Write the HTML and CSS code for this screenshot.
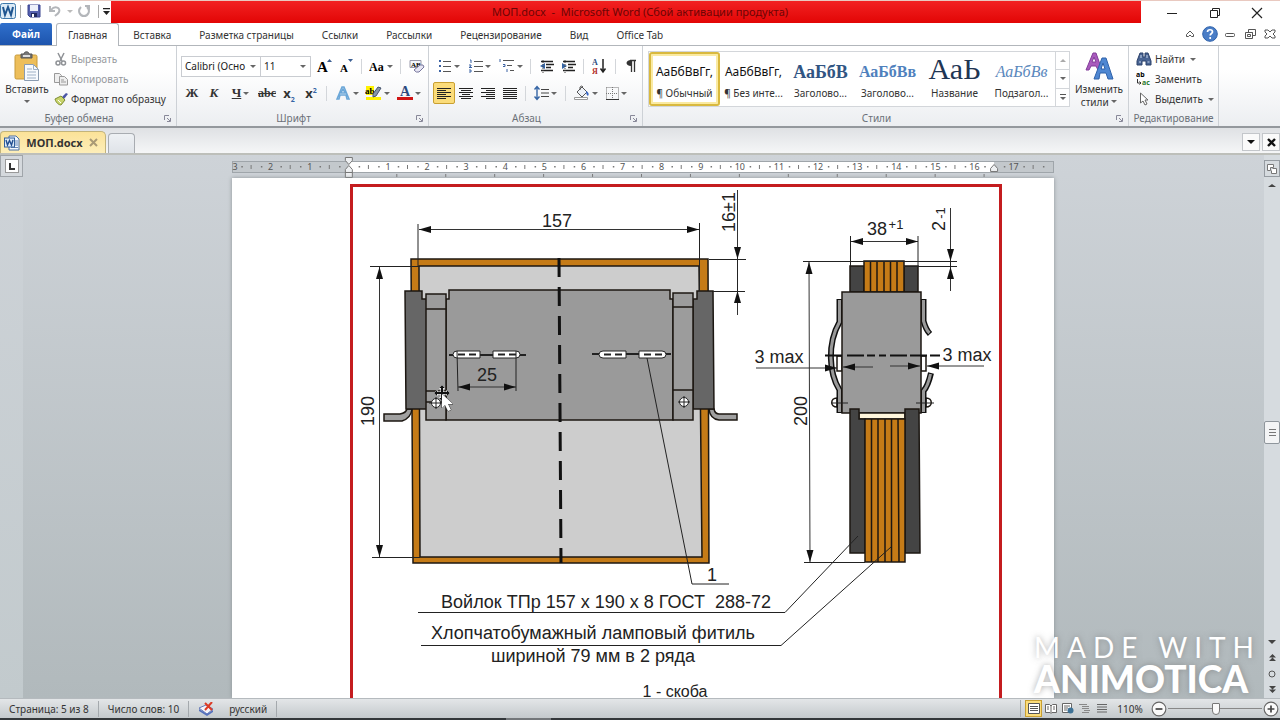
FILE: index.html
```html
<!DOCTYPE html>
<html lang="ru">
<head>
<meta charset="utf-8">
<title>МОП.docx - Microsoft Word</title>
<link rel="stylesheet" href="styles.css">
</head>
<body>
<header class="titlebar">
  <div class="quick">
    <svg class="logo" width="16" height="16" viewBox="0 0 16 16"><rect x=".5" y=".5" width="15" height="15" rx="2" fill="#dceaf6" stroke="#3e78ab"/><path d="M3 4l2 8 3-8 3 8 2-8" fill="none" stroke="#1f5590" stroke-width="2"/></svg>
    <i class="bar"></i>
    <button class="ib" aria-label="Сохранить"><svg width="14" height="14" viewBox="0 0 14 14"><path d="M1 1h12v12H3l-2-2z" fill="#5560ae" stroke="#3b4590"/><path d="M3 1h8v6H3z" fill="#eef1fa"/><path d="M4 9h6v4H4z" fill="#222b60"/><path d="M5 10h2v3H5z" fill="#fff"/></svg></button>
    <button class="ib" aria-label="Отменить"><svg width="14" height="14" viewBox="0 0 14 14"><path d="M2 2v5h5M3 6c4-5 10-2 8 2-1 2-3 3-4 4" fill="none" stroke="#b3b6ba" stroke-width="2"/></svg></button>
    <i class="caret pale"></i>
    <button class="ib" aria-label="Вернуть"><svg width="14" height="14" viewBox="0 0 14 14"><path d="M4 3c-4 4-1 9 3 9s7-5 3-9M8 2h4v4" fill="none" stroke="#b3b6ba" stroke-width="2"/></svg></button>
    <i class="bar"></i>
    <button class="ib narrow" aria-label="Настройка панели"><svg width="7" height="7" viewBox="0 0 7 7"><path d="M0 0h7v1.300H0zM0 3h7l-3.500 4z" fill="#222"/></svg></button>
  </div>
  <h1 class="title">МОП.docx &nbsp;-&nbsp; Microsoft Word (Сбой активации продукта)</h1>
  <div class="wincontrols">
    <button aria-label="Свернуть"><svg width="12" height="12" viewBox="0 0 12 12"><path d="M1 6.500h10" stroke="#222"/></svg></button>
    <button aria-label="Восстановить"><svg width="12" height="12" viewBox="0 0 12 12"><path d="M1.500 3.500h7v7h-7zM3.500 3V1.500h7v7H9" fill="none" stroke="#222"/></svg></button>
    <button aria-label="Закрыть"><svg width="12" height="12" viewBox="0 0 12 12"><path d="M1 1l10 10M11 1L1 11" stroke="#222" stroke-width="1.200"/></svg></button>
  </div>
</header>

<nav class="tabs">
  <button class="file">Файл</button>
  <button class="tab active">Главная</button>
  <button class="tab">Вставка</button>
  <button class="tab">Разметка страницы</button>
  <button class="tab">Ссылки</button>
  <button class="tab">Рассылки</button>
  <button class="tab">Рецензирование</button>
  <button class="tab">Вид</button>
  <button class="tab">Office Tab</button>
  <div class="doccontrols">
    <button aria-label="Свернуть ленту"><svg width="10" height="8" viewBox="0 0 10 8"><path d="M1.500 4.500L5 1l3.500 3.500v2H6.500L5 5 3.500 6.500h-2z" fill="#fff" stroke="#555"/></svg></button>
    <button aria-label="Справка"><svg width="16" height="16" viewBox="0 0 16 16"><circle cx="8" cy="8" r="7.300" fill="#4a7dc6" stroke="#2f62ab"/><path d="M5.500 6c0-3 5-3 5 0 0 1.500-2.300 1.600-2.300 3.600M8.200 11v2" fill="none" stroke="#fff" stroke-width="1.700"/></svg></button>
    <button aria-label="Свернуть окно"><svg width="12" height="12" viewBox="0 0 12 12"><rect x="1.500" y="5.500" width="9" height="3" rx="1" fill="#fff" stroke="#555"/></svg></button>
    <button aria-label="Восстановить окно"><svg width="12" height="12" viewBox="0 0 12 12"><path d="M4.500 1.500h7v6h-3v-3h-4z" fill="#fff" stroke="#555"/><path d="M1.500 4.500h7v6h-7zM3.500 6.500h3v2h-3z" fill="#fff" stroke="#555"/></svg></button>
    <button aria-label="Закрыть окно"><svg width="12" height="10" viewBox="0 0 12 10"><path d="M1 1h3l2 2 2-2h3v2L9 5l2 2v2H8L6 7 4 9H1V7l2-2-2-2z" fill="#fff" stroke="#555"/></svg></button>
  </div>
</nav>

<section class="ribbon">
  <div class="group clip">
    <div class="body">
      <button class="big"><svg width="26" height="30" viewBox="0 0 26 30"><rect x="1" y="4" width="22" height="24" rx="1.500" fill="#edbe5a" stroke="#c79a3b"/><path d="M7 3h3c0-3 5-3 5 0h3v4H7z" fill="#777" stroke="#555"/><path d="M9 4h7v2H9z" fill="#ddd"/><path d="M10.500 13.500h9l5 5v11h-14z" fill="#f7fafe" stroke="#8a9bb0"/><path d="M19.500 13.500v5h5M13 18h5M13 21h9M13 24h9M13 27h9" fill="none" stroke="#9db0c6"/></svg><span>Вставить</span><i class="caret"></i></button>
      <div class="stack">
        <button class="small off"><svg width="14" height="14" viewBox="0 0 14 14"><path d="M4 1l4 8M10 1L6 9" stroke="#8f9296" stroke-width="1.500"/><circle cx="4" cy="11" r="2" fill="none" stroke="#8f9296" stroke-width="1.500"/><circle cx="9.500" cy="11" r="2" fill="none" stroke="#8f9296" stroke-width="1.500"/></svg>Вырезать</button>
        <button class="small off"><svg width="14" height="14" viewBox="0 0 14 14"><path d="M.5 1.500h5l2 2v7h-7z" fill="#eee" stroke="#999"/><path d="M5.500 4.500h5l3 3v5.500h-8zM7 8h3M7 10h5" fill="#eee" stroke="#999"/></svg>Копировать</button>
        <button class="small"><svg width="14" height="14" viewBox="0 0 14 14"><path d="M8 5l4-4 2 1-4 5z" fill="#4b55a5"/><path d="M1 7l6-3 4 4-4 5c-2 0-5-2-6-6z" fill="#c8d36c" stroke="#7d8d33"/><path d="M4 8l3 3" stroke="#fff"/></svg>Формат по образцу</button>
      </div>
    </div>
    <div class="caption"><span>Буфер обмена</span><svg class="launch" width="7" height="7" viewBox="0 0 7 7"><path d="M.5 5V.5H5M3 3l3 3M6.500 3v3.500H3" fill="none" stroke="#889"/></svg></div>
  </div>

  <div class="group font">
    <div class="body rows">
      <div class="row">
        <label class="pick name"><select aria-label="Шрифт"><option>Calibri (Осно</option></select></label>
        <label class="pick size"><select aria-label="Размер"><option>11</option></select></label>
        <button class="tb grow">
          <svg width="16" height="16" viewBox="0 0 16 16"><text x="1" y="14" class="serif" font-size="15">A</text><path d="M11 4l2.500-3L16 4z" fill="#3b5f93"/></svg></button>
        <button class="tb"><svg width="16" height="16" viewBox="0 0 16 16"><text x="2" y="14" class="serif" font-size="11">A</text><path d="M10 1h5l-2.500 3z" fill="#3b5f93"/></svg></button>
        <i class="sep"></i>
        <button class="tb wide"><svg width="16" height="16" viewBox="0 0 16 16"><text x="0" y="13" class="serif" font-size="12">Aa</text></svg><i class="caret"></i></button>
        <i class="sep"></i>
        <button class="tb mid"><svg width="16" height="16" viewBox="0 0 16 16"><path d="M1 2.500h11v7H1z" fill="#f4f6fa" stroke="#99a"/><text x="2" y="9" font-size="7" class="serif">AB</text><path d="M5 12l6-5q4-1 4 2l-5 5q-3 1-5-2z" fill="#e7e6f4" stroke="#77769c"/></svg></button>
      </div>
      <div class="row">
        <button class="tb serif b">Ж</button>
        <button class="tb serif b it">К</button>
        <button class="tb wide serif b"><u>Ч</u><i class="caret"></i></button>
        <button class="tb serif b"><s>abc</s></button>
        <button class="tb b"><span>x<sub>2</sub></span></button>
        <button class="tb b"><span>x<sup>2</sup></span></button>
        <i class="sep"></i>
        <button class="tb wide"><svg width="16" height="16" viewBox="0 0 16 16"><path d="M2 14L7 2h2l5 12h-2l-1-4H5l-1 4zM6 8h4L8 4z" fill="#fff" stroke="#6ba7d8" stroke-width="1.500"/></svg><i class="caret"></i></button>
        <button class="tb wide"><svg width="17" height="16" viewBox="0 0 17 16"><path d="M1 1h8v9H1zM1 12h15v3H1z" fill="#fff200"/><text x="0" y="9" font-size="9" class="serif">ab</text><path d="M8 9l5-7 3 1-5 8-3 1z" fill="#8794a8" stroke="#45546c"/></svg><i class="caret"></i></button>
        <button class="tb wide"><svg width="16" height="16" viewBox="0 0 16 16"><text x="3" y="11" font-size="14" class="serif navy">A</text><path d="M0 12h16v3H0z" fill="#d01414"/></svg><i class="caret"></i></button>
      </div>
    </div>
    <div class="caption"><span>Шрифт</span><svg class="launch" width="7" height="7" viewBox="0 0 7 7"><path d="M.5 5V.5H5M3 3l3 3M6.500 3v3.500H3" fill="none" stroke="#889"/></svg></div>
  </div>

  <div class="group para">
    <div class="body rows">
      <div class="row">
        <button class="tb list" aria-label="Маркеры"><svg width="14" height="14" viewBox="0 0 14 14"><path d="M1 1h2v2H1zM1 6h2v2H1zM1 11h2v2H1z" fill="#3b62a4"/><path d="M5 2.500h8M5 7.500h8M5 12.500h8" stroke="#555"/></svg><i class="caret"></i></button>
        <button class="tb list" aria-label="Нумерация"><svg width="14" height="14" viewBox="0 0 14 14"><path d="M1 1h1v3M0 6h2v1L0 8.500h3M0 11h2v2H0" fill="none" stroke="#3b62a4"/><path d="M5 2.500h9M5 7.500h9M5 12.500h9" stroke="#555"/></svg><i class="caret"></i></button>
        <button class="tb list" aria-label="Многоуровневый список"><svg width="16" height="14" viewBox="0 0 16 14"><path d="M1 0v3M4 5.500h2v2H4M8 10v3" fill="none" stroke="#3b62a4"/><path d="M4 1.500h11M8 6.500h5M11 11.500h4" stroke="#555"/></svg><i class="caret"></i></button>
        <i class="sep"></i>
        <button class="tb" aria-label="Уменьшить отступ"><svg width="15" height="13" viewBox="0 0 15 13"><path d="M2 1.500h12M7 4.500h8M7 7.500h5M2 10.500h12" stroke="#222" stroke-width="1.500"/><path d="M6 3v6L1 6z" fill="#3565a5"/><path d="M4 0v13" stroke="#444" stroke-dasharray="1 1"/></svg></button>
        <button class="tb" aria-label="Увеличить отступ"><svg width="15" height="13" viewBox="0 0 15 13"><path d="M2 1.500h12M7 4.500h8M7 7.500h5M2 10.500h12" stroke="#222" stroke-width="1.500"/><path d="M1 3v6l5-3z" fill="#3565a5"/><path d="M4 0v13" stroke="#444" stroke-dasharray="1 1"/></svg></button>
        <i class="sep"></i>
        <button class="tb mid" aria-label="Сортировка"><svg width="15" height="18" viewBox="0 0 15 18"><text x="0" y="8" font-size="8" class="serif navy">А</text><text x="0" y="17" font-size="8" class="serif red">Я</text><path d="M11 2v12M8.500 11.500L11 15l2.500-3.500" fill="none" stroke="#222" stroke-width="1.500"/></svg></button>
        <i class="sep"></i>
        <button class="tb" aria-label="Знаки абзаца"><svg width="12" height="14" viewBox="0 0 12 14"><path d="M11 1.500H5M6.500 1v12M9.500 1v12" stroke="#333" fill="none" stroke-width="1.300"/><path d="M6 1C0 1 0 7 6 7z" fill="#333"/></svg></button>
      </div>
      <div class="row">
        <button class="tb on" aria-label="По левому краю"><svg width="14" height="12" viewBox="0 0 14 12"><path d="M0 1.500h14M0 3.500h9M0 5.500h14M0 7.500h9M0 9.500h14M0 11.500h9" stroke="#222"/></svg></button>
        <button class="tb" aria-label="По центру"><svg width="14" height="12" viewBox="0 0 14 12"><path d="M0 1.500h14M2 3.500h10M0 5.500h14M3 7.500h8M0 9.500h14M2 11.500h10" stroke="#222"/></svg></button>
        <button class="tb" aria-label="По правому краю"><svg width="14" height="12" viewBox="0 0 14 12"><path d="M0 1.500h14M5 3.500h9M0 5.500h14M5 7.500h9M0 9.500h14M5 11.500h9" stroke="#222"/></svg></button>
        <button class="tb" aria-label="По ширине"><svg width="14" height="12" viewBox="0 0 14 12"><path d="M0 1.500h14M0 3.500h14M0 5.500h14M0 7.500h14M0 9.500h14M0 11.500h14" stroke="#222"/></svg></button>
        <i class="sep"></i>
        <button class="tb list" aria-label="Интервал"><svg width="15" height="16" viewBox="0 0 15 16"><path d="M3 2v12M.5 4.500L3 1.500l2.500 3M.5 11.500l2.500 3 2.500-3" fill="none" stroke="#3565a5" stroke-width="1.400"/><path d="M7 4.500h8M7 8h8M7 11.500h8" stroke="#444"/></svg><i class="caret"></i></button>
        <i class="sep"></i>
        <button class="tb list" aria-label="Заливка"><svg width="16" height="16" viewBox="0 0 16 16"><path d="M3 7l5-5 5 5-5 5z" fill="#eef2f8" stroke="#555"/><path d="M6 5V2q2-2 3 0" fill="none" stroke="#555"/><path d="M12 6q4 2 2 5-2-1-2-5z" fill="#3565c5"/><path d="M.5 12.500h13v2H.500z" fill="#fff" stroke="#999"/></svg><i class="caret"></i></button>
        <button class="tb list" aria-label="Границы"><svg width="13" height="13" viewBox="0 0 13 13"><path d="M.5.5h12v12M.5.500v12M6.500 0v12M0 6.500h12" fill="none" stroke="#777" stroke-dasharray="1 1"/><path d="M0 12.500h13" stroke="#333"/></svg><i class="caret"></i></button>
      </div>
    </div>
    <div class="caption"><span>Абзац</span><svg class="launch" width="7" height="7" viewBox="0 0 7 7"><path d="M.5 5V.5H5M3 3l3 3M6.500 3v3.500H3" fill="none" stroke="#889"/></svg></div>
  </div>

  <div class="group styles">
    <div class="body">
      <div class="gallery">
        <button class="style chosen"><span class="sample">АаБбВвГг,</span><span>¶ Обычный</span></button>
        <button class="style"><span class="sample">АаБбВвГг,</span><span>¶ Без инте...</span></button>
        <button class="style"><span class="sample h1">АаБбВ</span><span>Заголово...</span></button>
        <button class="style"><span class="sample h2">АаБбВв</span><span>Заголово...</span></button>
        <button class="style"><span class="sample name">АаЬ</span><span>Название</span></button>
        <button class="style"><span class="sample sub">АаБбВв</span><span>Подзагол...</span></button>
        <div class="spin">
          <button aria-label="Вверх"><i class="caret up"></i></button>
          <button aria-label="Вниз"><i class="caret"></i></button>
          <button aria-label="Ещё"><i class="more"></i><i class="caret"></i></button>
        </div>
      </div>
      <button class="big change"><svg width="30" height="30" viewBox="0 0 30 30"><path d="M2 19L9 2h3l6 17h-4l-2-4H7l-2 4zM8 11h4l-2-5z" fill="#a95bbd" stroke="#823d99"/><path d="M10 28l8-21h4l7 21h-5l-2-6h-6l-1 6zM17 18h4l-2-6z" fill="#4e87d2" stroke="#2f62aa"/></svg><span>Изменить<br>стили <i class="caret"></i></span></button>
    </div>
    <div class="caption"><span>Стили</span><svg class="launch" width="7" height="7" viewBox="0 0 7 7"><path d="M.5 5V.5H5M3 3l3 3M6.500 3v3.500H3" fill="none" stroke="#889"/></svg></div>
  </div>

  <div class="group edit">
    <div class="body">
      <div class="stack">
        <button class="small"><svg width="16" height="14" viewBox="0 0 14 14"><path d="M3 1h3v4h2V1h3l3 8v4H9V9H5v4H0V9z" fill="#496493" stroke="#2d426b"/><path d="M2 10h2M10.500 10h2M4 3v3M10 3v3" stroke="#c8d7ed"/></svg>Найти <i class="caret"></i></button>
        <button class="small"><svg width="16" height="16" viewBox="0 0 16 16"><text x="0" y="6" font-size="7" class="b">ab</text><text x="6" y="14" font-size="7" class="b green">ac</text><path d="M1.500 8v4H5M3.500 10.500L5 12l-1.500 1.500" fill="none" stroke="#333"/></svg>Заменить</button>
        <button class="small"><svg width="16" height="14" viewBox="0 0 14 14"><path d="M3.500 1v10l2.500-2 2 4 2-1-2-4h3z" fill="#fff" stroke="#666"/></svg>Выделить <i class="caret"></i></button>
      </div>
    </div>
    <div class="caption"><span>Редактирование</span></div>
  </div>
</section>

<div class="docbar">
  <button class="doctab"><svg width="16" height="16" viewBox="0 0 16 16"><path d="M5 1h7l3 3v11H5z" fill="#f5f9fe" stroke="#4a6fa4"/><path d="M11 6h3M11 8h3M11 10h3M7 12.500h7" stroke="#6687b5"/><rect x=".5" y="3" width="10" height="9" fill="#dce9f8" stroke="#315f9c"/><path d="M2 5l1.500 5L5.500 5.500 7.500 10 9 5" fill="none" stroke="#214e91" stroke-width="1.400"/></svg><b>МОП.docx</b><svg width="9" height="9" viewBox="0 0 9 9"><path d="M1 1l7 7M8 1L1 8" stroke="#a99a75" stroke-width="2"/></svg></button>
  <button class="newtab" aria-label="Новая вкладка"></button>
  <div class="tabtools">
    <button aria-label="Список вкладок"><i class="caret dark"></i></button>
    <button aria-label="Закрыть вкладку"><svg width="9" height="9" viewBox="0 0 9 9"><path d="M1 1l7 7M8 1L1 8" stroke="#111" stroke-width="2.400"/></svg></button>
  </div>
</div>

<main class="work">
  <aside class="vruler"><button aria-label="Табуляция"><svg width="14" height="14" viewBox="0 0 14 14"><rect x=".5" y=".5" width="13" height="13" fill="#fff" stroke="#999"/><path d="M5 4v6h5" fill="none" stroke="#333" stroke-width="2"/></svg></button></aside>
  <div class="canvas">
    <div class="sheet">
      <svg id="ruler" class="ruler" viewBox="232 157 823 21"></svg>
      <article class="page">
        <div class="frame">
          <svg viewBox="353 187 646 511" role="img" aria-label="Чертёж щётки">
            <defs>
              <marker id="arrow" markerUnits="userSpaceOnUse" markerWidth="12" markerHeight="8" refX="12" refY="4" orient="auto-start-reverse"><path d="M0 .500L12 4 0 7.500z" fill="#111"/></marker>
            </defs>
            <g class="ln">
              <path d="M411 259H708L709 563H413z" fill="#c57b17"/>
              <path d="M419 266H699L702 557H420z" fill="#cdcdcd"/>
              <path d="M384 414H400Q406 413 407 409H412Q411 418 402 421H384z" fill="#a0a0a0"/>
              <path d="M709 409H714Q715 414 719 414H737V420H719Q710 419 709 409z" fill="#a0a0a0"/>
              <path d="M446 299H449V290H670V299H673V420H446z" fill="#9a9a9a"/>
              <path d="M405 291H422V299H427V409H406z" fill="#666"/>
              <path d="M697 291H713L714 409H693V299H697z" fill="#666"/>
              <path d="M426 294H446V420H426zM426 309H446M426 391H446M426 402H446M673 293H693V420H673zM673 307H693M673 390H693" fill="#9c9c9c"/>
            </g>
            <path d="M559 258L561 563" stroke="#111" stroke-width="3" stroke-dasharray="19 10"/>
            <g class="thin">
              <path d="M449 355H526M592 354H671" stroke-width="2"/>
              <path d="M480 351H457Q453 351 453 354.500T457 358H480zM493 351H516Q520 351 520 354.500T516 358H493zM626 351H603Q599 351 599 354.500T603 358H626zM639 351H662Q666 351 666 354.500T662 358H639z" fill="#fff"/>
              <path d="M458 354.500H479M498 354.500H519M604 354.500H625M644 354.500H665" stroke-dasharray="7 4" stroke-width="2"/>
              <circle cx="436" cy="403" r="4.500" fill="#fff"/><circle cx="684" cy="402" r="4.500" fill="#fff"/>
              <path d="M429 403H443M436 397V409M678 402H690M684 396V408"/>
              <path d="M457 351L458 391M516 351V391M418 224V266M699.500 223V291M370 266.500H419M372 557.500H420M709 259.500H746M713 291.500H745M737.500 259V291"/>
              <path d="M647 358L692 584H729"/>
            </g>
            <g class="dim">
              <path d="M458 387H516" marker-start="url(#arrow)" marker-end="url(#arrow)"/>
              <path d="M419 229.500H699" marker-start="url(#arrow)" marker-end="url(#arrow)"/>
              <path d="M379.500 267V557" marker-start="url(#arrow)" marker-end="url(#arrow)"/>
              <path d="M737.500 190V259" marker-end="url(#arrow)"/><path d="M737.500 315V291" marker-end="url(#arrow)"/>
            </g>
            <g class="ln">
              <path d="M850 266H864V292H850zM904 266H918V292H904z" fill="#444"/>
              <path d="M864 261H904V292H864zM870.500 261V292M877 261V292M884 261V292M890.500 261V292M897 261V292" fill="#c57b17"/>
              <path d="M837 398C830 398 830 407 837 407zM926 398C933 398 933 407 926 407z" fill="#fff"/>
              <path d="M837 356H842V371H837zM921 356H926V371H921z" fill="#fff"/>
            </g>
            <path d="M839.500 299V322C827 344 829 373 839.500 390V413M923.500 299V321Q926 330 930 334M931 373Q928 386 923.500 391V413" fill="none" stroke="#111" stroke-width="6"/>
            <path d="M839.500 300V322C827 344 829 373 839.500 390V412M923.500 300V321Q926 330 929.500 333M930.500 374Q928 386 923.500 391V412" fill="none" stroke="#999" stroke-width="3"/>
            <g class="ln">
              <path d="M842 292H921V413H842z" fill="#9a9a9a"/>
              <path d="M859 413H905V419H859z" fill="#fff6dc"/>
              <path d="M850 409H859V419H865V553H850zM905 409H919L920 553H905z" fill="#444"/>
              <path d="M865 419H905V562H865zM871.500 419V562M878 419V562M885 419V562M891.500 419V562M898 419L899 562" fill="#c57b17"/>
            </g>
            <path d="M825 355.500H845M847 355.500H875M879 355.500H886M890 355.500H940" stroke="#111" stroke-width="2" stroke-dasharray="17 3"/>
            <g class="thin">
              <path d="M831 403H848M916 403H934M803 261.500H957M804 562.500H865M850.500 236V266M918 236V266M904 266.500H957M950.500 261V266"/>
              <path d="M418 612.500H785L858 536M421 645.500H781L891 547"/>
            </g>
            <g class="dim">
              <path d="M809 262L810 562" marker-start="url(#arrow)" marker-end="url(#arrow)"/>
              <path d="M851 241.500H918" marker-start="url(#arrow)" marker-end="url(#arrow)"/>
              <path d="M950.500 208V261" marker-end="url(#arrow)"/><path d="M950.500 291V267" marker-end="url(#arrow)"/>
              <path d="M756 368H837" marker-end="url(#arrow)"/><path d="M873 367H843" marker-end="url(#arrow)"/>
              <path d="M890 366H920" marker-end="url(#arrow)"/><path d="M984 366H927" marker-end="url(#arrow)"/>
            </g>
            <g class="note" text-anchor="middle">
              <text x="557" y="227">157</text>
              <text x="487" y="381">25</text>
              <text x="712" y="581">1</text>
              <text x="877" y="235">38</text><text x="896" y="229" class="tiny">+1</text>
              <text x="779" y="363">3 max</text><text x="967" y="361">3 max</text>
              <text transform="translate(374 411) rotate(-90)">190</text>
              <text transform="translate(735 212) rotate(-90)">16±1</text>
              <text transform="translate(807 411) rotate(-90)">200</text>
              <text transform="translate(945 226) rotate(-90)">2</text><text transform="translate(945 213) rotate(-90)" class="tiny">-1</text>
              <text x="606" y="608">Войлок ТПр 157 x 190 x 8 ГОСТ &#160;288-72</text>
              <text x="593" y="639">Хлопчатобумажный ламповый фитиль</text>
              <text x="593" y="662">шириной 79 мм в 2 ряда</text>
              <text x="675" y="697" class="low">1 - скоба</text>
            </g>
            <g class="pointer">
              <path d="M442 385l3 3h-2v4h4v-2l3 3-3 3v-2h-4v4h2l-3 3-3-3h2v-4h-4v2l-3-3 3-3v2h4v-4h-2z" fill="#111" stroke="#fff" stroke-width="1"/>
              <path d="M442 394v14l3-3 3 6 3-1-3-6h5z" fill="#fff" stroke="#333"/>
            </g>
          </svg>
        </div>
      </article>
    </div>
  </div>
  <aside class="scroll">
    <button class="rulertoggle" aria-label="Линейка"><svg width="12" height="12" viewBox="0 0 12 12"><path d="M1.500 1.500h6v3h-3v3h-3zM6.500 5.500h4v5h-5v-3" fill="#fff" stroke="#777"/></svg></button>
    <button aria-label="Прокрутить вверх"><i class="caret up big-caret"></i></button>
    <div class="track"><div class="thumb"><i></i><i></i><i></i></div></div>
    <button aria-label="Прокрутить вниз"><i class="caret big-caret"></i></button>
    <button aria-label="Предыдущая"><svg width="7" height="8" viewBox="0 0 7 8"><path d="M3.500 0L7 3.500H0zM3.500 3.500L7 7H0z" fill="#444"/></svg></button>
    <button aria-label="Объект"><svg width="8" height="8" viewBox="0 0 8 8"><circle cx="4" cy="4" r="3" fill="none" stroke="#555"/></svg></button>
    <button aria-label="Следующая"><svg width="7" height="8" viewBox="0 0 7 8"><path d="M0 0h7L3.500 3.500zM0 3.500h7L3.500 7z" fill="#444"/></svg></button>
  </aside>
  <div class="watermark"><span class="made">MADE WITH</span><span class="brand">ANIMOTICA</span></div>
</main>

<footer class="status">
  <span class="cell">Страница: 5 из 8</span>
  <span class="cell">Число слов: 10</span>
  <span class="cell lang"><svg width="16" height="14" viewBox="0 0 16 14"><path d="M1 6l7-3 7 4-6 5z" fill="#f4f6fc" stroke="#667ab8"/><path d="M1 7l8 5 6-4v2l-6 4-8-5z" fill="#5470bd"/><path d="M7 1l7 7M14 0L7 8" stroke="#dc3b26" stroke-width="2"/></svg>русский</span>
  <div class="views">
    <button class="on" aria-label="Разметка"><svg width="12" height="11" viewBox="0 0 12 11"><path d="M.5.500h11v10H.500zM2 3.500h8M2 5.500h8M2 7.500h8" fill="#fff" stroke="#555"/></svg></button>
    <button aria-label="Чтение"><svg width="12" height="11" viewBox="0 0 12 11"><path d="M.5 1.500h4L6 3l1.500-1.500h4v8H7L6 10.500 5 9.500H.500zM6 3v7M2 4h2M2 6h2M8 4h2M8 6h2" fill="#fff" stroke="#666"/></svg></button>
    <button aria-label="Веб"><svg width="12" height="11" viewBox="0 0 12 11"><path d="M.5.500h9v9H.500zM2 3h6M2 5h4M2 7h3" fill="#fff" stroke="#666"/><circle cx="8.500" cy="7.500" r="3" fill="#3d7195"/></svg></button>
    <button aria-label="Структура"><svg width="12" height="11" viewBox="0 0 12 11"><path d="M0 1.500h8M3 3.500h7M3 5.500h7M5 7.500h6M3 9.500h7" stroke="#888"/></svg></button>
    <button aria-label="Черновик"><svg width="12" height="11" viewBox="0 0 12 11"><path d="M1 1.500h10M1 4h10M1 6.500h10M1 9h10" stroke="#666"/></svg></button>
    <span class="percent">110%</span>
    <button class="round" aria-label="Уменьшить"><svg width="16" height="16" viewBox="0 0 14 14"><circle cx="7" cy="7" r="6" fill="#fafafa" stroke="#666"/><path d="M4 7h6" stroke="#444" stroke-width="1.500"/></svg></button>
    <input type="range" min="0" max="100" value="51" aria-label="Масштаб">
    <button class="round" aria-label="Увеличить"><svg width="16" height="16" viewBox="0 0 14 14"><circle cx="7" cy="7" r="6" fill="#fafafa" stroke="#666"/><path d="M4 7h6M7 4v6" stroke="#444" stroke-width="1.500"/></svg></button>
  </div>
</footer>
<div class="taskbar"></div>
<script src="ruler.js"></script>
</body>
</html>
```
FILE: styles.css
```css
* { box-sizing: border-box; }
body {
  margin: 0;
  height: 100vh;
  display: flex;
  flex-direction: column;
  overflow: hidden;
  font: 10px/14px "Noto Sans", "Open Sans", sans-serif;
  color: #333;
  background: #fff;
}
button {
  font: inherit;
  color: inherit;
  background: none;
  border: 0;
  padding: 0;
  display: inline-flex;
  align-items: center;
  justify-content: center;
  white-space: nowrap;
}
svg { display: block; flex: none; }
.caret {
  display: inline-block;
  flex: none;
  border: 3px solid transparent;
  border-top-color: #666;
  border-bottom: 0;
}
.caret.pale { border-top-color: #bbb; }
.caret.dark { border-width: 4px 4px 0; border-top-color: #111; }
.caret.up { border-top: 0; border-bottom: 3px solid #aaa; }
.caret.big-caret { border-left-width: 4px; border-right-width: 4px; border-top-color: #444; border-bottom-color: #444; }
.caret.big-caret:not(.up) { border-top-width: 4px; }
.serif, text.serif { font-family: "Liberation Serif", serif; font-weight: 700; }
.b { font-weight: 700; }
.it { font-style: italic; }
.navy { fill: #2c4a80; }
.red { fill: #b2302a; }
.green { fill: #2f7d32; }

/* title bar */
.titlebar { flex: none; height: 23px; display: flex; border-top: 1px solid #e9c9c0; }
.quick { width: 111px; display: flex; align-items: center; gap: 2px; padding-bottom: 2px; }
.quick .bar { width: 1px; height: 13px; margin: 0 2px; background: #aaa; }
.ib { width: 20px; height: 18px; }
.ib.narrow { width: 9px; }
.title {
  flex: 1;
  margin: 0;
  padding-left: 28px;
  text-align: center;
  font-size: 11px;
  line-height: 22px;
  font-weight: 400;
  color: #6c0505;
  background: linear-gradient(#f22222, #e20505);
}
.wincontrols { width: 139px; padding: 2px 8px 0 16px; display: flex; justify-content: space-between; align-items: center; }
.wincontrols button { width: 30px; height: 20px; }

/* ribbon tabs */
.tabs { flex: none; height: 23px; display: flex; border-bottom: 1px solid #b2b6bb; }
.file { width: 52px; border-radius: 2px 2px 0 0; margin-right: 4px; font-weight: 700; color: #fff; background: linear-gradient(#3070cc, #1d54ad); }
.tab { padding: 0 14px; height: 23px; }
.tab.active { padding: 0 11px; background: #fff; border: 1px solid #b2b6bb; border-bottom: 0; border-radius: 3px 3px 0 0; }
.doccontrols { margin-left: auto; display: flex; }
.doccontrols button { width: 20px; }

/* ribbon */
.ribbon { flex: none; height: 82px; display: flex; background: linear-gradient(#fff 30%, #eceef1); border-bottom: 2px solid #94989d; }
.group { display: flex; flex-direction: column; border-right: 1px solid #cdd1d6; }
.group .body { flex: 1; display: flex; min-height: 0; }
.caption { position: relative; height: 16px; padding-right: 18px; text-align: center; line-height: 16px; color: #6b7078; }
.launch { position: absolute; right: 5px; top: 5px; }
.clip { width: 177px; }
.font { width: 252px; }
.para { width: 214px; }
.styles { width: 486px; }
.edit { width: 90px; }
.edit .caption { padding: 0; }
.big { width: 54px; flex-direction: column; justify-content: flex-start; padding-top: 5px; line-height: 13px; gap: 2px; }
.big .caret { margin-top: 2px; }
.stack { display: flex; flex-direction: column; padding-top: 3px; }
.small { height: 20px; gap: 3px; justify-content: flex-start; }
.small .caret { margin-left: 2px; }
.off { color: #96999d; }
.body.rows { flex-direction: column; padding: 8px 0 0 4px; gap: 3px; }
.row { display: flex; align-items: center; height: 24px; }
.sep { width: 1px; height: 15px; margin: 0 4px; background: #d3d6da; }
.tb { width: 22px; height: 22px; font-size: 13px; gap: 2px; border-radius: 2px; }
.tb.wide, .tb.list { width: 31px; }
.tb.mid { width: 23px; }
.tb.grow { margin-left: 2px; }
.tb sub, .tb sup { font-size: 7px; line-height: 0; color: #3565a5; }
.tb s { font-size: 12px; }
.tb.on, .views .on { background: #fbdc7a; border: 1px solid #c9a032; }
.pick { position: relative; height: 21px; border: 1px solid #c9ccd1; background: #fff; }
.pick.name { width: 81px; }
.pick.size { width: 52px; margin-left: -1px; }
.pick select { appearance: none; width: 100%; height: 19px; border: 0; padding: 0 0 0 3px; font: inherit; color: #222; background: none; }
.pick::after { content: ""; position: absolute; right: 4px; top: 8px; border: 3px solid transparent; border-top-color: #666; border-bottom: 0; }
.gallery { display: flex; width: 422px; height: 56px; margin: 5px 0 0 5px; background: #fff; border: 1px solid #d3d6da; }
.style { flex: 1; min-width: 0; flex-direction: column; justify-content: flex-end; padding-bottom: 6px; overflow: hidden; border-radius: 3px; }
.chosen { border: 2px solid #d9b93f; box-shadow: inset 0 0 0 2px #faeaa2; padding-bottom: 4px; }
.sample { height: 28px; line-height: 28px; font-size: 12px; color: #111; }
.sample.h1 { font: 700 18px/28px "Liberation Serif", serif; color: #315583; }
.sample.h2 { font: 700 16px/28px "Liberation Serif", serif; color: #4f81bd; }
.sample.name { font: 30px/22px "Liberation Serif", serif; color: #1f3654; }
.sample.sub { font: italic 16px/28px "Liberation Serif", serif; color: #5a88bd; }
.spin { width: 14px; display: flex; flex-direction: column; border-left: 1px solid #d3d6da; }
.spin button { flex: 1; flex-direction: column; gap: 2px; }
.spin button + button { border-top: 1px solid #d3d6da; }
.more { width: 6px; height: 1px; background: #555; }
.change { width: 58px; }
.change .caret { margin: 0 0 3px; }
.edit .stack { padding-left: 7px; }

/* document tabs */
.docbar { flex: none; height: 27px; display: flex; align-items: flex-end; background: linear-gradient(#dfe1e4, #f5f6f7); border-bottom: 2px solid #bdbfba; }
.doctab { width: 106px; height: 22px; gap: 6px; padding-right: 4px; border: 1px solid #c3b47b; border-bottom: 0; border-radius: 4px 5px 0 0; background: linear-gradient(#fbe298, #fdeeb9); font-size: 11px; }
.newtab { width: 27px; height: 20px; margin-left: 2px; border: 1px solid #a8acb1; border-bottom: 0; border-radius: 4px 4px 0 0; background: linear-gradient(#eef1f4, #dfe3e8); }
.tabtools { margin-left: auto; display: flex; gap: 2px; padding-bottom: 2px; }
.tabtools button { width: 18px; height: 18px; border: 1px solid #c3c6ca; background: #fafafa; }

/* document area */
.work { position: relative; flex: 1; min-height: 0; display: flex; background: linear-gradient(#ced3d8, #b1b9bc); }
.vruler { width: 23px; background: linear-gradient(#ced3d8, #c2cacd); }
.vruler button { width: 23px; height: 22px; border: 1px solid #a0a5aa; background: #d5d9dd; }
.canvas { flex: 1; min-width: 0; overflow: hidden; display: flex; justify-content: center; padding-right: 1px; }
.sheet { width: 822px; flex: none; display: flex; flex-direction: column; }
.ruler { width: 100%; height: 21px; margin-top: 2px; }
.ruler text { font-size: 9px; text-anchor: middle; fill: #555; }
.page { flex: 1; min-height: 0; overflow: hidden; padding: 6px 52px 0 118px; background: #fff; box-shadow: 0 0 4px #8d9397; }
.frame { height: 640px; border: 3px solid #c41c1f; }
.frame svg { width: 100%; height: auto; }
.ln { stroke: #1c1712; stroke-width: 1.5; }
.thin { fill: none; stroke: #222; stroke-width: 1; }
.dim { fill: none; stroke: #333; stroke-width: 1; }
.pointer path { paint-order: stroke; }
.note { font-family: "Liberation Sans", Arial, sans-serif; font-size: 18px; fill: #222; }
.note .tiny { font-size: 13px; }
.note .low { font-size: 16px; }

.scroll { width: 16px; display: flex; flex-direction: column; padding-top: 5px; background: #d6dbdf; }
.scroll button { height: 16px; }
.scroll .rulertoggle { height: 17px; border: 1px solid #959ba1; }
.track { flex: 1; padding-top: 228px; }
.thumb { height: 23px; display: flex; flex-direction: column; align-items: center; justify-content: center; gap: 2px; border: 1px solid #8f969c; border-radius: 2px; background: #f3f4f5; }
.thumb i { width: 7px; height: 1px; background: #777; }

.watermark { position: absolute; right: 19px; bottom: 2px; display: flex; flex-direction: column; color: #fff; font-family: Lato, sans-serif; text-shadow: 0 0 6px #6668; }
.made { font-size: 28px; line-height: 30px; letter-spacing: 7px; }
.brand { font-size: 37px; line-height: 34px; font-weight: 900; }

/* status bar */
.status { flex: none; height: 20px; display: flex; align-items: center; background: linear-gradient(#e3e6e8, #c4c9cc); border-top: 1px solid #b5babe; }
.cell { display: flex; align-items: center; height: 16px; padding: 0 9px; border-right: 1px solid #a4a9ad; }
.lang { gap: 15px; }
.views { margin-left: auto; height: 17px; display: flex; align-items: center; border-left: 1px solid #a4a9ad; padding-left: 4px; }
.views button { width: 17px; height: 17px; }
.percent { width: 40px; text-align: center; }
.views .round { width: 18px; }
.views input { appearance: none; width: 94px; height: 15px; margin: 0; background: linear-gradient(#888, #888) center / 100% 1px no-repeat; }
.views input::-webkit-slider-thumb { appearance: none; width: 8px; height: 12px; border: 1px solid #777; border-radius: 1px 1px 4px 4px; background: #fafafa; }
.taskbar { flex: none; height: 2px; background: linear-gradient(90deg, #33373a 506px, #73777a 506px 551px, #33373a 551px); }
```
FILE: ruler.js
```js
const ruler = document.getElementById("ruler");
const zero = 349;
const cm = 39.15;
const parts = [
  '<rect x="232.5" y="161.5" width="822" height="11" fill="#c3c8cc" stroke="#9fa5aa"/>',
  '<rect x="349" y="162" width="646" height="10" fill="#fff"/>'
];
for (let quarter = -12; quarter <= 71; quarter++) {
  const x = zero + quarter * cm / 4;
  if (quarter === 0 || quarter === 66) continue;
  if (quarter % 4 === 0) {
    const labelX = quarter === -12 ? 235 : x;
    parts.push(`<text x="${labelX}" y="170">${Math.abs(quarter / 4)}</text>`);
  } else if (quarter % 2 === 0) {
    parts.push(`<path d="M${x} 165v4" stroke="#777"/>`);
  } else {
    parts.push(`<rect x="${x}" y="166" width="1.5" height="1.5" fill="#777"/>`);
  }
}
for (let x = 397; x < 990; x += 49) parts.push(`<path d="M${x} 174v3" stroke="#777"/>`);
parts.push('<path d="M345.5 157.500h7v3l-3.500 4-3.500-4zM345.5 172.500v-3l3.500-4 3.500 4v3zM345.5 172.500h7v5h-7z" fill="#eef0f2" stroke="#777"/>');
parts.push('<path d="M991.5 171.500v-3l3.500-4 3.500 4v3z" fill="#eef0f2" stroke="#777"/>');
ruler.innerHTML = parts.join("");
```
